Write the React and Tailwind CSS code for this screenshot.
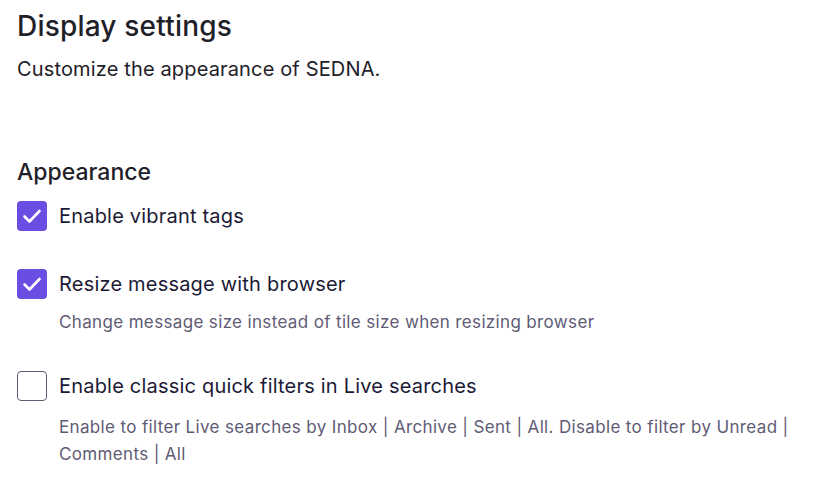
import React from "react";

const Checkbox = ({ checked }) =>
    checked ? (
        <div className="flex h-[30px] w-[30px] shrink-0 items-center justify-center rounded-[4px] bg-[#6a4de3]">
            <svg width="30" height="30" viewBox="0 0 30 30" fill="none" stroke="white" strokeWidth="2.6" strokeLinecap="round" strokeLinejoin="round">
                <path d="M7.5 15.5l5 5L22.5 10" />
            </svg>
        </div>
    ) : (
        <div className="h-[30px] w-[30px] shrink-0 rounded-[4px] border border-[#5f5b72] bg-white" />
    );

const Option = ({ checked, label, description, className = "", descClass = "mt-[10px]" }) => (
    <div className={`flex flex-col ${className}`}>
        <div className="flex items-center gap-[12px]">
            <Checkbox checked={checked} />
            <span className="text-[20px] leading-[30px] tracking-[0.2px] text-[#1c1a36]">{label}</span>
        </div>
        {description && (
            <p className={`${descClass} pl-[42px] text-[17px] leading-[27px] tracking-[0.35px] text-[#5f5b75]`}>
                {description}
            </p>
        )}
    </div>
);

export default function App() {
    return (
        <div
            className="h-[486px] w-[830px] bg-white px-[17px] pt-[8px]"
            style={{ fontFamily: "Inter, 'Noto Sans', sans-serif" }}
        >
            <h1 className="text-[28px] font-medium leading-[36px] tracking-[0.2px] text-[#1f2129]">
                Display settings
            </h1>
            <p className="mt-[12px] text-[20px] leading-[26px] tracking-[0.15px] text-[#1f2129]">
                Customize the appearance of SEDNA.
            </p>

            <h2 className="mt-[75px] text-[23px] font-medium leading-[30px] text-[#1f2129]">
                Appearance
            </h2>
            <div className="mt-[14px] flex flex-col">
                <Option checked label="Enable vibrant tags" />
                <Option
                    className="mt-[38px]"
                    checked
                    label="Resize message with browser"
                    description="Change message size instead of tile size when resizing browser"
                />
                <Option
                    className="mt-[35px]"
                    descClass="mt-[13px]"
                    label="Enable classic quick filters in Live searches"
                    description="Enable to filter Live searches by Inbox | Archive | Sent | All. Disable to filter by Unread | Comments | All"
                />
            </div>
        </div>
    );
}
